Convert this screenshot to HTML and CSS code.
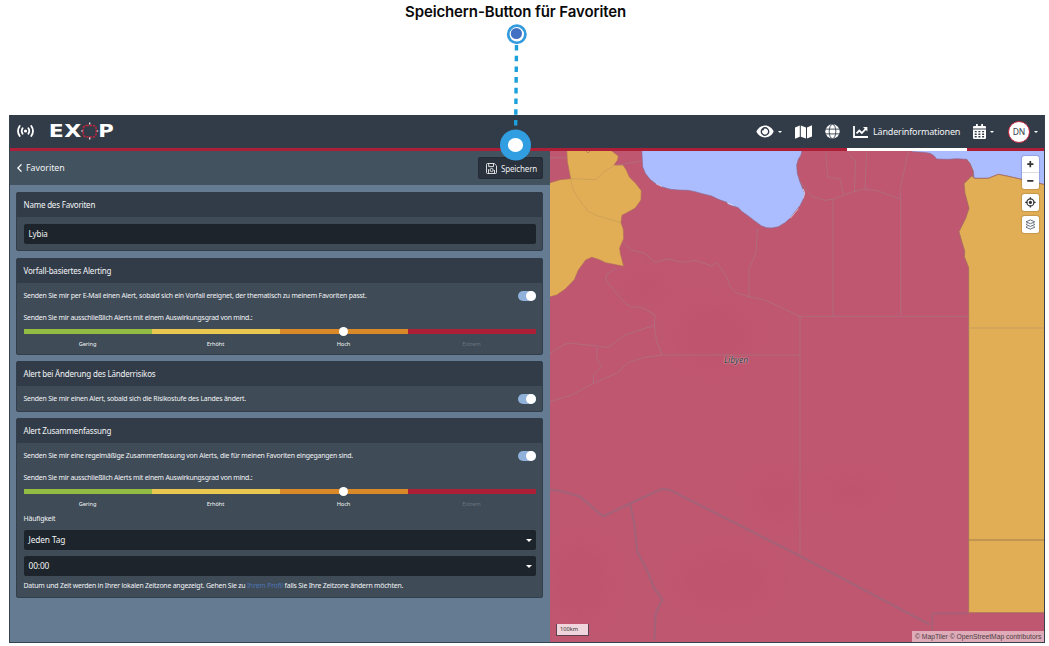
FILE: index.html
```html
<!DOCTYPE html>
<html lang="de">
<head>
<meta charset="utf-8">
<title>EXOP – Favoriten</title>
<link rel="stylesheet" href="styles.css">
</head>
<body>
<h1 class="caption"><span>Speichern-Button für Favoriten</span></h1>
<div class="app">
  <header class="topbar">
    <svg class="ico-signal" width="17" height="14" viewBox="0 0 17 14" fill="none" stroke="#fff" stroke-width="1.8" stroke-linecap="round"><circle cx="8.5" cy="7" r="1.6" fill="#fff" stroke="none"/><path d="M5.6 4.3Q3.8 7 5.6 9.7M11.4 4.3Q13.2 7 11.4 9.7M2.7 2Q-.7 7 2.7 12M14.3 2Q17.7 7 14.3 12"/></svg>
    <svg class="logo" width="66" height="18" viewBox="0 0 66 18">
      <g font-family="DejaVu Sans" font-weight="bold" font-size="17" fill="#fff"><text x="-1.3" y="15.2" textLength="15" lengthAdjust="spacingAndGlyphs">E</text><text x="14.3" y="15.2" textLength="17" lengthAdjust="spacingAndGlyphs">X</text><text x="48.2" y="15.2" textLength="15.5" lengthAdjust="spacingAndGlyphs">P</text></g>
      <rect x="33.2" y="3.4" width="13" height="11.6" rx="3.4" fill="none" stroke="#c3243d" stroke-width="1.5" stroke-dasharray="2.3 .9"/>
      <path d="M39.7.5v2M39.7 15.6v2M31.2 9h1.5M46.7 9h1.5" stroke="#fff" stroke-width="1.2"/>
    </svg>
    <nav class="nav">
      <div class="item eye"><svg width="18" height="13" viewBox="0 0 18 13"><path fill="#fff" fill-rule="evenodd" d="M9 .6C5 .6 2 3 .3 6.5 2 10 5 12.4 9 12.4s7-2.4 8.7-5.9C16 3 13 .6 9 .6zM9 2.1a4.4 4.4 0 1 1 0 8.8 4.4 4.4 0 0 1 0-8.8z"/><path fill="#fff" d="M9 3.5a3 3 0 1 1-2.8 2q1.6.4 2-1.8A3 3 0 0 1 9 3.5z"/></svg><i class="caret"></i></div>
      <div class="item map-i"><svg width="17" height="14" viewBox="0 0 17 14" fill="#fff"><path d="M0 2.6 4.8.6v11.2L0 13.8zM5.8.6l5.2 1.9v11.1l-5.2-1.9zM12 2.4 17 .3v11.2l-5 2.1z"/></svg></div>
      <div class="item globe"><svg width="15" height="15" viewBox="0 0 15 15"><circle cx="7.5" cy="7.5" r="7.2" fill="#fff"/><g fill="none" stroke="#323c48" stroke-width=".9"><ellipse cx="7.5" cy="7.5" rx="3.3" ry="7.2"/><path d="M0 5.1h15M0 9.9h15"/></g></svg></div>
      <div class="item active"><svg width="15" height="12" viewBox="0 0 15 12" fill="none" stroke="#fff" stroke-width="1.8"><path d="M1 0v11h14M3.5 7.4 6.3 4.6 8.8 7 13 2.6"/><path fill="#fff" stroke="none" d="M10 1h4.4v4.4z"/></svg><span>Länderinformationen</span></div>
      <div class="item cal"><svg width="13" height="15" viewBox="0 0 13 15"><path fill="#fff" d="M1.2 2H3V0h1.8v2h3.4V0H10v2h1.8Q13 2 13 3.2V4.6H0V3.2Q0 2 1.2 2zM0 5.5h13v8.2q0 1.3-1.2 1.3H1.2Q0 15 0 13.7z"/><path stroke="#323c48" stroke-width="1.4" stroke-dasharray="2 1.7" d="M1.7 7.6h10M1.7 10.2h10M1.7 12.7h10"/></svg><i class="caret"></i></div>
      <div class="item user"><b>DN</b><i class="caret"></i></div>
    </nav>
  </header>
  <main class="main">
    <section class="panel">
      <div class="subbar">
        <svg width="5" height="8" viewBox="0 0 5 8" fill="none" stroke="#fff" stroke-width="1.3"><path d="M4.5.4.9 4l3.6 3.6"/></svg>
        <span class="back">Favoriten</span>
        <button class="save"><svg width="11" height="11" viewBox="0 0 11 11" fill="none" stroke="#eee" stroke-width=".9"><path d="M.5 1.5q0-1 1-1h6.7l2.3 2.3v6.7q0 1-1 1h-8q-1 0-1-1zM2.7.6v3h4.8v-3M2.5 10.4V6.2"/><circle cx="5.6" cy="7" r="1.6"/><path d="M8.5 10V7"/></svg><span>Speichern</span></button>
      </div>
      <div class="cards">
        <article class="card c1">
          <h2><span>Name des Favoriten</span></h2>
          <div class="field"><span>Lybia</span></div>
        </article>
        <article class="card c2">
          <h2><span>Vorfall-basiertes Alerting</span></h2>
          <div class="row"><span>Senden Sie mir per E-Mail einen Alert, sobald sich ein Vorfall ereignet, der thematisch zu meinem Favoriten passt.</span><i class="switch"></i></div>
          <p class="min"><span>Senden Sie mir ausschließlich Alerts mit einem Auswirkungsgrad von mind.:</span></p>
          <div class="slider"><i class="thumb"></i></div>
          <div class="labels"><span>Gering</span><span>Erhöht</span><span>Hoch</span><span class="off">Extrem</span></div>
        </article>
        <article class="card c3">
          <h2><span>Alert bei Änderung des Länderrisikos</span></h2>
          <div class="row"><span>Senden Sie mir einen Alert, sobald sich die Risikostufe des Landes ändert.</span><i class="switch"></i></div>
        </article>
        <article class="card c4">
          <h2><span>Alert Zusammenfassung</span></h2>
          <div class="row"><span>Senden Sie mir eine regelmäßige Zusammenfassung von Alerts, die für meinen Favoriten eingegangen sind.</span><i class="switch"></i></div>
          <p class="min"><span>Senden Sie mir ausschließlich Alerts mit einem Auswirkungsgrad von mind.:</span></p>
          <div class="slider"><i class="thumb"></i></div>
          <div class="labels"><span>Gering</span><span>Erhöht</span><span>Hoch</span><span class="off">Extrem</span></div>
          <p class="freq"><span>Häufigkeit</span></p>
          <div class="field select"><span>Jeden Tag</span><i class="arrow"></i></div>
          <div class="field select"><span>00:00</span><i class="arrow"></i></div>
          <p class="note"><span>Datum und Zeit werden in Ihrer lokalen Zeitzone angezeigt. Gehen Sie zu <a>Ihrem Profil</a> falls Sie Ihre Zeitzone ändern möchten.</span></p>
        </article>
      </div>
    </section>
    <section class="map">
      <svg class="geo" viewBox="0 0 1482 1473" width="494" height="491" preserveAspectRatio="none">
        <defs><filter id="soft" x="-30%" y="-30%" width="160%" height="160%"><feGaussianBlur stdDeviation="28"/></filter></defs>
        <rect width="1482" height="1473" fill="#c05770"/>
        <g fill="#b84b68" opacity=".22" filter="url(#soft)"><ellipse cx="490" cy="550" rx="110" ry="90"/><ellipse cx="290" cy="410" rx="70" ry="40"/><ellipse cx="520" cy="1290" rx="140" ry="80"/><ellipse cx="680" cy="1040" rx="70" ry="60"/><ellipse cx="90" cy="1290" rx="90" ry="120"/><ellipse cx="910" cy="1020" rx="80" ry="40"/></g>
        <g transform="translate(-15 -18)" stroke-linejoin="round">
          <path fill="#abbcff" stroke="#8d6b91" stroke-width="2" d="M290 10 293 65 301 85 315 103 333 117 355 127 376 133 400 135 430 136 450 140 475 147 500 153 520 163 545 172 552 179 580 188 590 199 610 213 628 227 650 243 665 248 680 249 700 245 720 233 735 220 750 200 765 182 775 162 779 145 772 128 764 108 757 86 755 60 760 43 768 30 772 10Z"/>
          <path fill="none" stroke="#e9e6f3" stroke-width="2" d="m333 116 18 9M547 174l18 7M736 220l14-17 10-12M775 160l4-16-4-12"/>
          <path fill="#e2ae55" stroke="#ad6d5c" stroke-width="2" d="M65 10 67 50 77 101 45 104 13 114V456L35 450 60 433 88 404 100 375 122 345 140 337 160 343 182 353 236 364 226 325 224 309 236 281 235 253 228 233 231 211 270 190 288 165 289 137 272 115 253 96 244 75 234 60 207 60 218 45 220 33 190 10ZM123 18l6 6 7-6"/>
          <path fill="none" stroke="#c69b5b" stroke-width="2" d="M77 101 152 104 178 80 210 60M77 101 85 135 110 175 128 198 155 212 228 233"/>
          <path fill="none" stroke="#aa7381" stroke-width="2.6" opacity=".85" d="M15 38h50M215 60l75-12M236 294 260 316 300 325 330 352 368 342 415 352 450 346 500 363 515 352 545 395 556 425 575 443 610 455 660 465 765 514H1272M638 249 633 322 612 373V455M212 370 185 388 182 405 205 433 240 475 260 486 290 487 330 510 328 542 300 550 240 570 190 607 80 595 60 597 15 625M328 542 335 590 352 630H765M352 630 300 637 250 652 215 685 145 715 80 750 15 770M145 715 146 690 170 665 155 640V607M765 514V1230M1067 510V163M864 514V163M864 163 840 166 800 154 764 108M864 163 920 142 955 132 1000 138 1067 163 1065 135 1080 65 1090 18M895 148 885 102 848 96 842 18M928 140 932 48 910 25M960 132 965 18"/>
        </g>
        <g transform="translate(720 -18)" stroke-linejoin="round">
          <path fill="#abbcff" stroke="#8d6b91" stroke-width="2" d="M355 10 368 20 400 22 420 25 432 32 440 42 475 43 500 41 530 43 540 56 550 80 552 100 595 100 625 88 655 94 690 102 770 120V10Z"/>
          <path fill="#c05770" stroke="#a36c5f" stroke-width="2" d="M530 43 540 56 550 80 546 92 522 116 500 80"/><path fill="#c05770" d="M528 44 505 50 490 100 522 118z"/>
          <path fill="#e2ae55" stroke="#a36c5f" stroke-width="2.5" d="M546 92 522 116 525 145 537 190 527 220 507 260 514 285 524 318 523 335 536 368V1403H770V120L690 102 655 94 625 88 595 100H552Z"/>
          <path stroke="#bd9863" stroke-width="2.2" d="M536 549H765"/><path stroke="#9a7a50" stroke-width="2.8" d="M536 1185H765"/>
        </g>
        <g transform="translate(-15 717)" fill="none" stroke="#9b657a" stroke-width="7" stroke-linejoin="round" opacity=".75"><path d="M15 299 50 304 105 320 140 350 175 379 255 341 300 320 350 297 375 300 755 493 1155 704"/><path d="M255 341 268 400 277 485 310 550 325 590 352 630 332 670 328 750"/><path d="M1162 740V670H1268" stroke-width="5"/></g>
      </svg>
      <span class="place">Libyen</span>
      <div class="controls">
        <div class="zoom"><svg width="17" height="33" viewBox="0 0 17 33" stroke="#333" stroke-width="1.7"><path d="M5.2 8.2h6.2M8.3 5.1v6.2M5.2 24.9h6.2"/><path d="M0 16.5h17" stroke="#ddd" stroke-width="1"/></svg></div>
        <div class="ctl"><svg width="17" height="17" viewBox="0 0 17 17" fill="none" stroke="#333" stroke-width="1.3"><circle cx="8.4" cy="8.4" r="3.5"/><circle cx="8.4" cy="8.4" r="1.6" fill="#333" stroke="none"/><path d="M8.4 3.2v2M8.4 11.6v2M3.2 8.4h2M11.6 8.4h2"/></svg></div>
        <div class="ctl"><svg width="17" height="17" viewBox="0 0 17 17" fill="none" stroke="#566270" stroke-width=".9"><path d="m8.4 3.9 4.4 1.9-4.4 1.9L4 5.8zM5.4 7.5 4 8.5l4.4 1.9 4.4-1.9-1.4-1M5.4 10.2 4 11.2l4.4 1.9 4.4-1.9-1.4-1"/></svg></div>
      </div>
      <div class="scale">100km</div>
      <div class="attrib"><span>© MapTiler © OpenStreetMap contributors</span></div>
    </section>
  </main>
</div>
<svg class="pointer" width="34" height="140" viewBox="499 22 34 140">
  <path d="M516.5 45 515.7 126" stroke="#1ca0dc" stroke-width="3.4" stroke-dasharray="5.6 5.1"/>
  <circle cx="516.8" cy="34.3" r="8.6" fill="#fff" stroke="#349bdc" stroke-width="2.8"/><circle cx="516.4" cy="33.5" r="5.6" fill="#4270c3"/>
  <circle cx="515.5" cy="145" r="15.5" fill="#309ee0"/><ellipse cx="515.5" cy="145" rx="7.6" ry="7.1" fill="#fff"/>
</svg>
</body>
</html>
```
FILE: styles.css
```css
* { box-sizing: border-box; }
body { margin: 0; width: 1049px; height: 646px; overflow: hidden; background: #fff; font-family: "Noto Sans", "Open Sans", sans-serif; color: #f2f4f6; }
h1, h2, p { margin: 0; font-weight: 400; }
span { white-space: nowrap; }
.caption { height: 115px; padding-left: 405px; font: 600 15px/23px Inter, sans-serif; letter-spacing: -.12px; color: #0a0a0a; }
.app { width: 1036px; height: 528px; margin-left: 9px; border: 1px solid #36424f; border-top: 0; background: #657b92; }
.topbar { height: 36px; display: flex; align-items: center; background: #323c48; border-bottom: 3px solid #ac1f36; padding-left: 7px; }
.ico-signal { margin-top: -1px; }
.logo { margin-left: 16px; margin-top: -1px; }
.nav { display: flex; margin-left: auto; height: 36px; align-self: flex-start; }
.item { display: flex; align-items: center; height: 36px; padding-bottom: 3px; }
.caret { border: 2px solid transparent; border-top: 2px solid #fff; border-bottom: 0; margin-left: 4px; }
.eye { margin-right: 13px; }
.map-i { margin-right: 13px; }
.globe { margin-right: 7px; }
.active { width: 120px; padding-left: 6px; gap: 5px; border-bottom: 3px solid #fff; padding-bottom: 0; font-size: 9px; letter-spacing: -.17px; }
.cal { margin-left: 6px; margin-right: 14px; }
.user b { width: 22px; height: 22px; border-radius: 50%; background: #fff; border: 1.5px solid #c3243d; color: #36404b; font: 8.5px/19px "Noto Sans", sans-serif; text-align: center; }
.user { padding-right: 6px; }
.main { display: flex; height: 491px; }
.panel { width: 540px; }
.subbar { height: 34px; background: #43525f; display: flex; align-items: center; padding: 0 7px; font-size: 8.8px; }
.back { margin-left: 4px; }
.save { margin-left: auto; width: 65px; height: 22px; border: 1px solid #242d37; border-radius: 2px; background: #29323d; color: #eef0f2; display: flex; align-items: center; padding: 0 0 0 7px; gap: 4px; font: 8px "Noto Sans", sans-serif; letter-spacing: -.15px; }
.cards { padding: 7px 7px 0 6px; display: flex; flex-direction: column; }
.card { border: 1px solid #323e4b; border-radius: 2px; background: #3f4b57; padding: 0 6.5px; }
.card h2 { height: 25px; margin: -1px -6.5px 0; padding-left: 6.5px; background: #323c48; font-size: 8px; line-height: 25px; letter-spacing: -.2px; }
.c1 { height: 59px; margin-bottom: 7px; }
.c2 { height: 97px; margin-bottom: 6px; }
.c3 { height: 51px; margin-bottom: 6px; }
.c4 { height: 180px; }
.field { height: 20px; margin-top: 7px; border-radius: 2px; background: #1d242b; padding: 0 5px; font-size: 8px; line-height: 20px; letter-spacing: -.1px; }
.row { height: 25px; display: flex; align-items: center; justify-content: space-between; font-size: 6.9px; letter-spacing: -.2px; }
.switch { width: 18px; height: 10px; border-radius: 5px; background: #8fb1da; display: flex; justify-content: flex-end; }
.switch::after { content: ""; width: 10px; height: 10px; border-radius: 50%; background: #fff; }
.min { height: 20px; font-size: 6.9px; line-height: 20px; letter-spacing: -.22px; }
.slider { height: 5px; margin-top: 1px; position: relative; background: linear-gradient(90deg, #93bd42 25%, #eac84f 25% 50%, #d98927 50% 75%, #ac1f36 75%); }
.thumb { position: absolute; left: 62.5%; top: -2px; width: 9px; height: 9px; margin-left: -4.5px; border-radius: 50%; background: #fff; }
.labels { display: grid; grid-template-columns: repeat(4, 1fr); height: 20px; text-align: center; font-size: 5.7px; line-height: 20px; letter-spacing: -.1px; }
.off { color: #6a747f; }
.freq { height: 10px; font-size: 6.9px; line-height: 9px; letter-spacing: -.15px; }
.select { display: flex; justify-content: space-between; align-items: center; margin-top: 6px; font-size: 8.3px; }
.arrow { border: 3px solid transparent; border-top: 3px solid #fff; border-bottom: 0; margin-right: -1px; }
.note { height: 20px; font-size: 6.9px; line-height: 20px; letter-spacing: -.2px; }
.note a { color: #4d75b3; }
.map { position: relative; width: 494px; height: 491px; overflow: hidden; }
.geo { display: block; }
.place { position: absolute; left: 174px; top: 202px; font: italic 8.5px/14px "Noto Sans", sans-serif; color: #333; text-shadow: 0 0 1px #fff9, 0 0 2px #fff9; }
.controls { position: absolute; right: 5px; top: 5px; display: flex; flex-direction: column; gap: 5px; }
.zoom, .ctl { width: 17px; height: 33px; border-radius: 2.5px; background: #fff; box-shadow: 0 0 1px 1px #0002; }
.ctl { height: 17px; }
.scale { position: absolute; left: 6px; bottom: 6px; width: 33px; height: 12px; border: 1.5px solid #5c4350; border-top: 0; background: #f0d5dc; color: #333; padding-left: 3px; font: 5.7px/11px "Noto Sans", sans-serif; }
.attrib { position: absolute; right: 0; bottom: 0; width: 132px; height: 11px; background: #dfabb8; color: #4b3b42; font: 6.75px/11px "Liberation Sans", sans-serif; padding-left: 3px; }
.pointer { position: absolute; left: 499px; top: 22px; }
```
